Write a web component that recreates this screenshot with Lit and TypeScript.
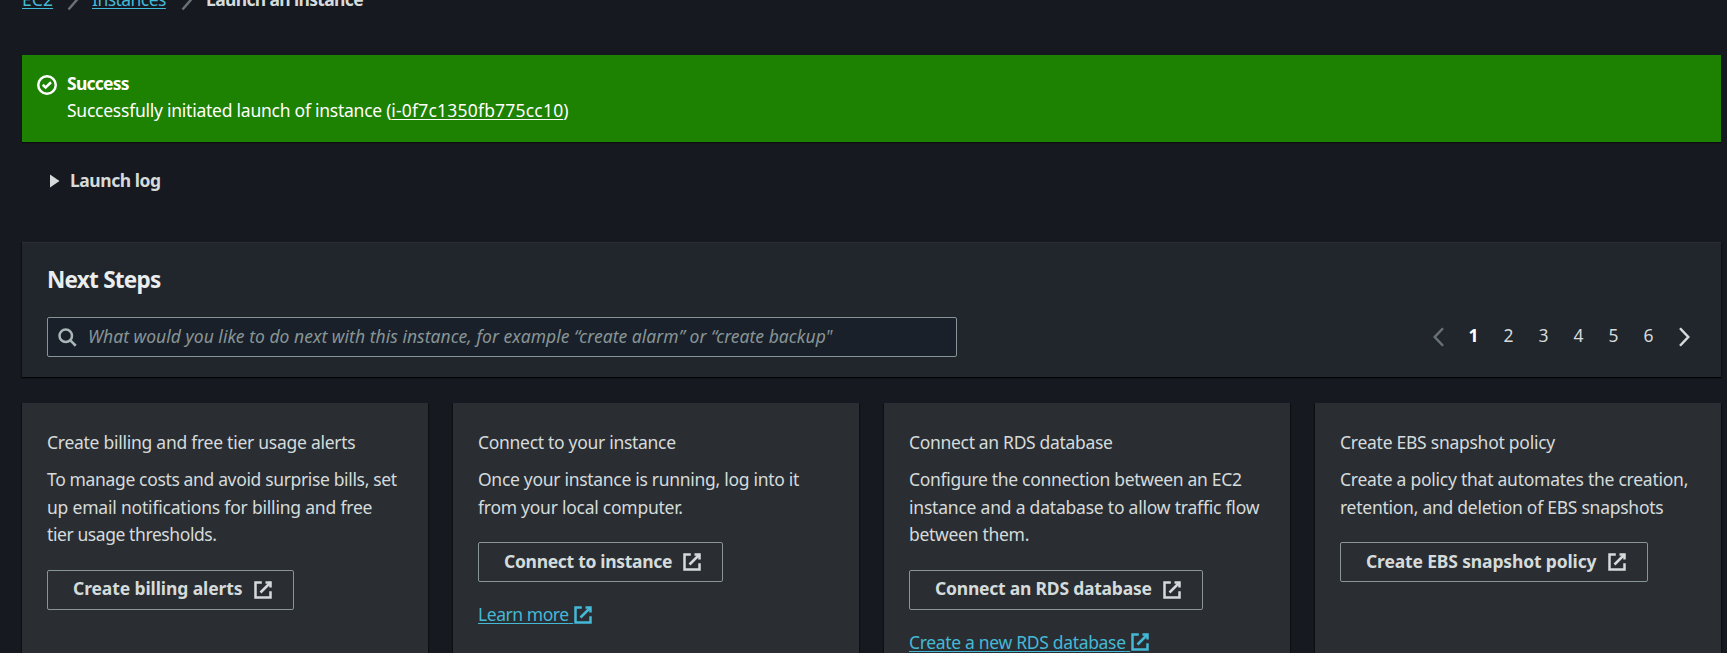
import { LitElement, html, css, svg, nothing } from "lit";
import { customElement, property } from "lit/decorators.js";
import { styleMap } from "lit/directives/style-map.js";

const ICONS: Record<string, unknown> = {
  external: svg`<path d="M10 2h4v4"/><path d="M6 10l8-8"/><path d="M14 9.048V14H2V2h5.04"/>`,
  search: svg`<circle cx="7" cy="7" r="5"/><path d="M15 15l-4.5-4.5"/>`,
  success: svg`<circle cx="8" cy="8" r="7"/><path d="M4.6 7.8l2.3 2.2 4.3-4.2"/>`,
  right: svg`<path d="M5 1l6 7-6.6 7.6"/>`,
  prev: svg`<path d="M11.2 1L4.6 8l6.6 7"/>`,
  next: svg`<path d="M4.8 1l6.6 7-6.6 7"/>`,
  caret: svg`<path d="M4 1.5l9.5 6.5-9.5 6.5z" fill="currentColor" stroke="none"/>`,
};

@customElement("ui-icon")
export class UiIcon extends LitElement {
  @property() name = "external";
  static styles = css`
    :host { display: inline-block; width: 20px; height: 20px; flex: none; }
    .glyph { display: block; width: 100%; height: 100%; overflow: visible; fill: none; stroke: currentColor; stroke-width: 2; }
  `;
  render() {
    return html`<svg class="glyph" viewBox="0 0 16 16" aria-hidden="true">${ICONS[this.name]}</svg>`;
  }
}

/** A run of text together with its tracking in pixels. */
type Run = [text: string, tracking: number];

const run = ([text, tracking]: Run) =>
  html`<span style=${styleMap({ letterSpacing: `${tracking}px` })}>${text}</span>`;

interface Step {
  title: Run;
  lines: Run[];
  action: Run;
  actionWidth: number;
  link?: Run;
}

const STEPS: Step[] = [
  {
    title: ["Create billing and free tier usage alerts", -0.264],
    lines: [
      ["To manage costs and avoid surprise bills, set", -0.353],
      ["up email notifications for billing and free", -0.2],
      ["tier usage thresholds.", -0.414],
    ],
    action: ["Create billing alerts", -0.1],
    actionWidth: 247,
  },
  {
    title: ["Connect to your instance", -0.3],
    lines: [
      ["Once your instance is running, log into it", -0.294],
      ["from your local computer.", -0.255],
    ],
    action: ["Connect to instance", -0.3],
    actionWidth: 245,
    link: ["Learn more", -0.442],
  },
  {
    title: ["Connect an RDS database", -0.32],
    lines: [
      ["Configure the connection between an EC2", -0.313],
      ["instance and a database to allow traffic flow", -0.212],
      ["between them.", -0.29],
    ],
    action: ["Connect an RDS database", -0.22],
    actionWidth: 294,
    link: ["Create a new RDS database", -0.32],
  },
  {
    title: ["Create EBS snapshot policy", -0.261],
    lines: [
      ["Create a policy that automates the creation,", -0.25],
      ["retention, and deletion of EBS snapshots", -0.256],
    ],
    action: ["Create EBS snapshot policy", -0.15],
    actionWidth: 308,
  },
];

@customElement("step-card")
export class StepCard extends LitElement {
  @property({ attribute: false }) step!: Step;
  static styles = css`
    :host {
      display: block; box-sizing: border-box; height: 290px; padding: 26px 25px; background: #2a2e33;
      box-shadow: 0 1px 1px 0 rgba(0, 0, 0, 0.5), 1px 1px 1px 0 rgba(0, 0, 0, 0.3), -1px 1px 1px 0 rgba(0, 0, 0, 0.3);
    }
    .title, .line, .link { white-space: nowrap; line-height: 27.5px; }
    .desc { margin: 9.6px 0 21.3px; }
    .action {
      display: flex; align-items: center; justify-content: space-between; box-sizing: border-box;
      height: 40px; padding: 0 20px 0 25px; border: 1px solid #879596; border-radius: 2px;
      background: transparent; color: #d5dbdb; font: 700 17.5px/27.5px "Noto Sans", sans-serif; white-space: nowrap;
    }
    .label { padding-bottom: 2px; }
    .link { display: flex; align-items: center; margin-top: 18.7px; color: #44b9d6; text-decoration: none; }
    .linktext { text-decoration: underline; text-underline-offset: 2px; text-decoration-thickness: 1px; text-decoration-skip-ink: none; white-space: pre; }
  `;
  render() {
    const s = this.step;
    return html`
      <div class="title">${run(s.title)}</div>
      <div class="desc">${s.lines.map((l) => html`<div class="line">${run(l)}</div>`)}</div>
      <button class="action" style=${styleMap({ width: `${s.actionWidth}px` })}>
        <span class="label">${run(s.action)}</span><ui-icon name="external"></ui-icon>
      </button>
      ${s.link
        ? html`<a class="link"><span class="linktext">${run(s.link)} </span><ui-icon name="external"></ui-icon></a>`
        : nothing}
    `;
  }
}

@customElement("app-root")
export class AppRoot extends LitElement {
  static styles = css`
    :host {
      display: flex; flex-direction: column; box-sizing: border-box; height: 653px; overflow: hidden;
      padding: 0 6px 0 22px; background: #16191f; color: #d5dbdb;
      font: 17.5px/27.5px "Noto Sans", sans-serif;
    }
    .crumbs { display: flex; align-items: center; flex: none; height: 27.5px; margin-top: -14px; white-space: nowrap; }
    .crumb { color: #44b9d6; text-decoration: underline; text-underline-offset: 2px; text-decoration-thickness: 1px; text-decoration-skip-ink: none; }
    .first { width: 30px; }
    .second { width: 74px; }
    .current { font-weight: 700; }
    .sep { color: #687078; margin: 0 9.5px 0 10.5px; }
    .flash {
      display: flex; flex: none; box-sizing: border-box; height: 87px; margin-top: 41.5px; padding: 15px;
      background: #1d8102; color: #fff; box-shadow: 0 1px 1px rgba(0, 0, 0, 0.5);
    }
    .flash-icon { margin: 5px 10px 0 0; }
    .flash-text { margin-top: -0.5px; white-space: nowrap; }
    .strong { font-weight: 700; }
    .instance { color: inherit; text-decoration: underline; text-underline-offset: 2px; text-decoration-thickness: 1px; text-decoration-skip-ink: none; }
    .log { display: flex; align-items: center; flex: none; margin: 24.5px 0 0 24px; height: 27.5px; font-weight: 700; }
    .caret { width: 16px; height: 16px; margin: 2px 8.5px 0 -0.5px; }
    .panel {
      flex: none; box-sizing: border-box; height: 135px; margin-top: 48px; padding: 22px 25px 20px;
      border-top: 1px solid #2a2e33; background: #21252c;
      box-shadow: 0 1px 1px 0 rgba(0, 0, 0, 0.5), 1px 1px 1px 0 rgba(0, 0, 0, 0.3), -1px 1px 1px 0 rgba(0, 0, 0, 0.3);
    }
    .heading { margin: 0; font-size: 22.5px; line-height: 30px; color: #eaeded; font-weight: 700; }
    .tools { display: flex; justify-content: space-between; margin-top: 22px; }
    .search {
      display: flex; align-items: center; box-sizing: border-box; width: 910px; height: 40px; padding: 0 9px;
      border: 1px solid #879596; border-radius: 2px; background: #1a2029;
    }
    .search-icon { color: #aab7b8; margin-right: 11px; }
    .placeholder { color: #879596; font-style: italic; white-space: nowrap; }
    .pages { display: flex; align-items: center; height: 40px; margin-right: -5px; }
    .page { width: 35px; text-align: center; padding-bottom: 2px; }
    .active { font-weight: 700; color: #fff; }
    .arrow { margin: 0 7.5px; }
    .dim { color: #687078; }
    .cards { display: grid; grid-template-columns: repeat(4, 406px); gap: 25px; margin-top: 26px; flex: none; }
  `;
  render() {
    return html`
      <nav class="crumbs">
        <a class="crumb first">${run(["EC2", 0.105])}</a><ui-icon class="sep" name="right"></ui-icon>
        <a class="crumb second">${run(["Instances", -0.544])}</a><ui-icon class="sep" name="right"></ui-icon>
        <span class="current">${run(["Launch an instance", -0.65])}</span>
      </nav>
      <section class="flash">
        <ui-icon class="flash-icon" name="success"></ui-icon>
        <div class="flash-text">
          <div class="strong">${run(["Success", -0.75])}</div>
          <div>${run(["Successfully initiated launch of instance (", -0.245])}<a class="instance">${run(["i-0f7c1350fb775cc10", 0.2])}</a>)</div>
        </div>
      </section>
      <div class="log"><ui-icon class="caret" name="caret"></ui-icon>${run(["Launch log", -0.45])}</div>
      <section class="panel">
        <h2 class="heading">${run(["Next Steps", -0.75])}</h2>
        <div class="tools">
          <div class="search">
            <ui-icon class="search-icon" name="search"></ui-icon>
            <span class="placeholder">${run(["What would you like to do next with this instance, for example “create alarm” or “create backup\"", 0.028])}</span>
          </div>
          <div class="pages">
            <ui-icon class="arrow dim" name="prev"></ui-icon>
            ${[1, 2, 3, 4, 5, 6].map((n) => html`<span class="page ${n === 1 ? "active" : ""}">${n}</span>`)}
            <ui-icon class="arrow" name="next"></ui-icon>
          </div>
        </div>
      </section>
      <div class="cards">${STEPS.map((s) => html`<step-card .step=${s}></step-card>`)}</div>
    `;
  }
}
